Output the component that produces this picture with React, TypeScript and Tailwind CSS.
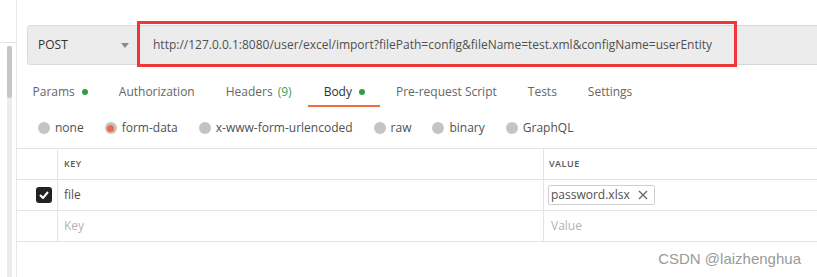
import React from "react";

const tabs = [
  { label: "Params", dot: true },
  { label: "Authorization" },
  { label: "Headers", count: "(9)" },
  { label: "Body", dot: true, active: true },
  { label: "Pre-request Script" },
  { label: "Tests" },
  { label: "Settings" },
];

const bodyModes = [
  { label: "none" },
  { label: "form-data", checked: true },
  { label: "x-www-form-urlencoded" },
  { label: "raw" },
  { label: "binary" },
  { label: "GraphQL" },
];

function Radio({ checked }: { checked?: boolean }) {
  return (
    <span className="w-[12px] h-[12px] rounded-full bg-[#c4c4c4] flex items-center justify-center">
      {checked && <span className="w-[7px] h-[7px] rounded-full bg-[#f26b3a]" />}
    </span>
  );
}

export default function App() {
  return (
    <div
      className="w-[817px] h-[277px] bg-white flex overflow-hidden text-[#505050]"
      style={{ fontFamily: '"Open Sans", "Noto Sans", sans-serif' }}
    >
      {/* 왼쪽 사이드바 가장자리 + 스크롤바 */}
      <div className="w-[17px] shrink-0 border-r border-[#e6e6e6] flex flex-col">
        <div className="h-[43px] border-b border-[#e6e6e6]" />
        <div className="flex-1 pl-[7px] pt-[3px] flex">
          <div className="w-[5px] bg-[#ececec] flex flex-col">
            <div className="h-[52px] rounded-full bg-[#c6c6c6]" />
          </div>
        </div>
      </div>

      <div className="flex-1 flex flex-col min-w-0">
        {/* 요청 라인 */}
        <div className="flex pl-[10px] pt-[25px] h-[65px]">
          <div className="w-[111px] h-[40px] bg-[#ececec] border border-[#dcdcdc] rounded-l-[3px] flex items-center justify-between pl-[10px] pr-[8px] text-[12px] text-[#333]">
            <span>POST</span>
            <svg width="8" height="5" viewBox="0 0 8 5">
              <path d="M0 0 L8 0 L4 5 Z" fill="#8a8a8a" />
            </svg>
          </div>
          <div className="relative flex-1 h-[40px] bg-[#ececec] border-y border-[#d8d8d8] flex items-center pl-[15px] text-[12px] text-[#505050] whitespace-nowrap">
            http://127.0.0.1:8080/user/excel/import?filePath=config&amp;fileName=test.xml&amp;configName=userEntity
            <div className="absolute left-[-1px] top-[-5px] w-[600px] h-[46px] border-[3px] border-[#ef3737]" />
          </div>
        </div>

        {/* 탭 */}
        <div className="flex mt-[19px]">
          {tabs.map((t) => (
            <div key={t.label} className="flex flex-col items-stretch">
              <div
                className={
                  "px-[15.5px] flex items-center leading-[16px] text-[12px] whitespace-nowrap " +
                  (t.active ? "text-[#333]" : "text-[#666]")
                }
              >
                {t.label}
                {t.count && <span className="ml-[5px] mr-[1px] text-[#2fa84f]">{t.count}</span>}
                {t.dot && <span className="ml-[7px] w-[6px] h-[6px] rounded-full bg-[#2f9e4a]" />}
              </div>
              <div className={"mt-[5px] h-[2px] " + (t.active ? "bg-[#f26b3a]" : "bg-transparent")} />
            </div>
          ))}
        </div>

        {/* 바디 타입 */}
        <div className="flex items-center gap-[21px] pl-[21px] mt-[13px] h-[16px] text-[12px] text-[#505050]">
          {bodyModes.map((m) => (
            <label key={m.label} className="flex items-center gap-[5px] whitespace-nowrap">
              <Radio checked={m.checked} />
              {m.label}
            </label>
          ))}
        </div>

        {/* 테이블 */}
        <div className="mt-[12px] border-t border-[#e4e4e4] text-[12px]">
          <div className="flex h-[31px] border-b border-[#e4e4e4]">
            <div className="w-[41px] border-r border-[#e4e4e4]" />
            <div className="w-[486px] border-r border-[#e4e4e4] flex items-center pl-[6px] text-[9px] font-semibold tracking-[0.5px] text-[#555]">
              KEY
            </div>
            <div className="flex-1 flex items-center pl-[5px] text-[9px] font-semibold tracking-[0.5px] text-[#555]">
              VALUE
            </div>
          </div>
          <div className="flex h-[31px] border-b border-[#e4e4e4]">
            <div className="w-[41px] border-r border-[#e4e4e4] flex items-center justify-end pr-[5px]">
              <span className="w-[16px] h-[16px] rounded-[3px] bg-[#222] flex items-center justify-center">
                <svg width="10" height="8" viewBox="0 0 10 8">
                  <path d="M1 4 L4 7 L9 1" stroke="white" strokeWidth="2" fill="none" />
                </svg>
              </span>
            </div>
            <div className="w-[486px] border-r border-[#e4e4e4] flex items-center pl-[6px] text-[#505050]">
              file
            </div>
            <div className="flex-1 flex items-center pl-[4px]">
              <span className="h-[20px] border border-[#cfcfcf] rounded-[2px] flex items-center pl-[2px] pr-[6px] gap-[8px] text-[#505050]">
                password.xlsx
                <svg width="10" height="10" viewBox="0 0 10 10">
                  <path d="M1 1 L9 9 M9 1 L1 9" stroke="#666" strokeWidth="1.3" />
                </svg>
              </span>
            </div>
          </div>
          <div className="flex h-[31px] border-b border-[#e4e4e4]">
            <div className="w-[41px] border-r border-[#e4e4e4]" />
            <div className="w-[486px] border-r border-[#e4e4e4] flex items-center pl-[6px] text-[#b3b3b3]">
              Key
            </div>
            <div className="flex-1 flex items-center pl-[7px] text-[#b3b3b3]">Value</div>
          </div>
          <div className="flex justify-end pr-[16px] pt-[6px]">
            <span
              className="text-[15px] text-[#9a9a9a]"
              style={{ fontFamily: '"Liberation Sans", Arial, sans-serif' }}
            >
              CSDN @laizhenghua
            </span>
          </div>
        </div>
      </div>
    </div>
  );
}
